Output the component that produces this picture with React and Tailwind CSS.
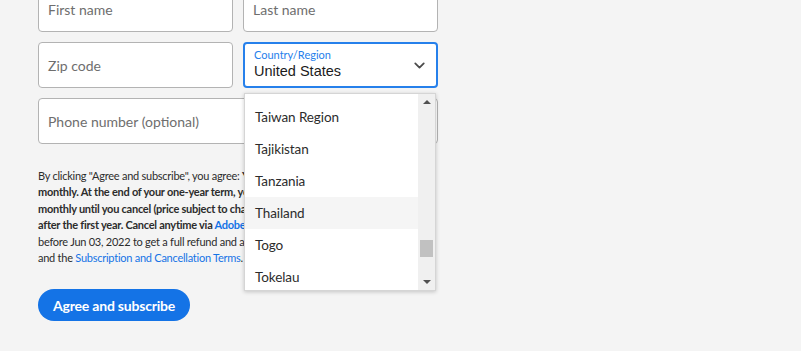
import { ChevronDown } from 'lucide-react';

const font = { fontFamily: 'Lato, "Open Sans", sans-serif' };

const Field = ({ placeholder, className = '' }) => (
  <div className={`h-[46px] bg-white border border-[#b3b3b3] rounded-[4px] flex items-center px-[9px] text-[14px] text-[#6e6e6e] ${className}`}>
    {placeholder}
  </div>
);

const countries = ['Taiwan Region', 'Tajikistan', 'Tanzania', 'Thailand', 'Togo', 'Tokelau'];

const CountryList = () => (
  <div className="absolute left-[1px] top-[51px] w-[192px] h-[198px] bg-white border border-[#d5d5d5] shadow-[0_1px_4px_rgba(0,0,0,0.2)] flex overflow-hidden z-10">
    <div className="flex-1 pt-[7px]">
      {countries.map((c) => (
        <div key={c} className={`h-[32px] flex items-center pl-[10px] text-[13.5px] tracking-[-0.1px] text-[#2c2c2c] ${c === 'Thailand' ? 'bg-[#f5f5f5]' : ''}`}>
          {c}
        </div>
      ))}
    </div>
    <div className="w-[17px] bg-[#f0f0f0] relative">
      <span className="absolute left-[5px] top-[6px] w-0 h-0 border-l-[4px] border-r-[4px] border-b-[4px] border-l-transparent border-r-transparent border-b-[#505050]" />
      <div className="absolute left-[2px] top-[146px] w-[13px] h-[17px] bg-[#c1c1c1]" />
      <span className="absolute left-[5px] bottom-[6px] w-0 h-0 border-l-[4px] border-r-[4px] border-t-[4px] border-l-transparent border-r-transparent border-t-[#505050]" />
    </div>
  </div>
);

export default function App() {
  return (
    <div className="w-[801px] h-[351px] bg-[#f4f4f4] overflow-hidden" style={font}>
      <div className="ml-[38px] w-[400px] mt-[-14px]">
        <div className="grid grid-cols-2 gap-x-[10px] gap-y-[10px]">
          <Field placeholder="First name" />
          <Field placeholder="Last name" />
          <Field placeholder="Zip code" />
          <div className="relative">
            <div className="h-[46px] bg-white border-2 border-[#2680eb] rounded-[4px] pl-[9px] pr-[8px] flex items-center justify-between">
              <div className="flex flex-col pb-[3px]">
                <span className="text-[11px] leading-[15px] text-[#2680eb]">Country/Region</span>
                <span className="text-[14.5px] leading-[18px] text-[#1b1b1b]" style={{ fontFamily: '"Liberation Sans", Arial, sans-serif' }}>United States</span>
              </div>
              <ChevronDown size={17} strokeWidth={2.5} className="text-[#4b4b4b]" />
            </div>
            <CountryList />
          </div>
          <Field placeholder="Phone number (optional)" className="col-span-2" />
        </div>

        <p className="mt-[24px] text-[11px] leading-[16.4px] text-[#2c2c2c] whitespace-nowrap tracking-[-0.25px]">
          By clicking "Agree and subscribe", you agree: <b>You will be charged US$54.99</b><br />
          <b>monthly. At the end of your one-year term, your subscription will</b><br />
          <b>monthly until you cancel (price subject to change). Cancellation</b><br />
          <b>after the first year. Cancel anytime via <span className="text-[#1473e6]">Adobe Account</span> or</b><br />
          before Jun 03, 2022 to get a full refund and avoid a fee. You<br />
          and the <span className="text-[#1473e6]">Subscription and Cancellation Terms</span>.
        </p>

        <button className="mt-[23px] h-[32px] px-[15px] rounded-full bg-[#1473e6] text-white text-[14px] font-bold tracking-[-0.2px]">
          Agree and subscribe
        </button>
      </div>
    </div>
  );
}
